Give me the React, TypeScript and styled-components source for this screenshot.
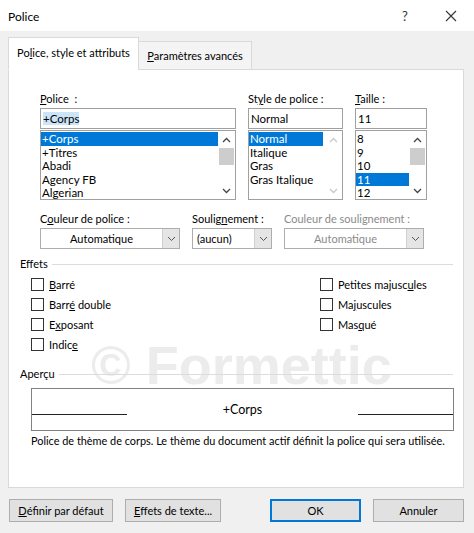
import styled, { createGlobalStyle } from 'styled-components';

const GlobalStyle = createGlobalStyle`
	html, body {
		margin: 0;
		padding: 0;
		background: #f0f0f0;
	}
	body {
		font-family: Lato, 'Noto Sans', sans-serif;
		font-size: 11px;
		color: #000;
	}
`;

const fonts = ['+Corps', '+Titres', 'Abadi', 'Agency FB', 'Algerian'];
const styles = ['Normal', 'Italique', 'Gras', 'Gras Italique'];
const sizes = ['8', '9', '10', '11', '12'];

const App = () => {
	return (
		<Window>
			<GlobalStyle />
			<TitleBar>
				<Title>Police</Title>
				<TitleButtons>
					<TitleBtn>?</TitleBtn>
					<TitleBtn>
						<svg width="12" height="12" viewBox="0 0 12 12">
							<path d="M1 1 L11 11 M11 1 L1 11" stroke="#333" strokeWidth="1.1" fill="none" />
						</svg>
					</TitleBtn>
				</TitleButtons>
			</TitleBar>
			<Body>
				<Tabs>
					<Tab $active>
						Po<u>l</u>ice, style et attributs
					</Tab>
					<Tab>
						<u>P</u>aramètres avancés
					</Tab>
				</Tabs>
				<Panel>
					<Watermark>© Formettic</Watermark>
					<FontGrid>
						<Column>
							<Label>
								<u>P</u>olice&nbsp; :
							</Label>
							<TextBox>
								<Highlight>+Corps</Highlight>
							</TextBox>
							<ListBox>
								<Items>
									{fonts.map((f, i) => (
										<Item key={f} $selected={i === 0}>
											{f}
										</Item>
									))}
								</Items>
								<ScrollBar thumbTop={15} />
							</ListBox>
						</Column>
						<Column>
							<Label>
								St<u>y</u>le de police :
							</Label>
							<TextBox>Normal</TextBox>
							<ListBox>
								<Items>
									{styles.map((f, i) => (
										<Item key={f} $selected={i === 0} $short>
											{f}
										</Item>
									))}
								</Items>
								<ScrollBar disabled />
							</ListBox>
						</Column>
						<Column>
							<Label>
								<u>T</u>aille :
							</Label>
							<TextBox>11</TextBox>
							<ListBox>
								<Items>
									{sizes.map((f, i) => (
										<Item key={f} $selected={i === 3}>
											{f}
										</Item>
									))}
								</Items>
								<ScrollBar thumbTop={15} />
							</ListBox>
						</Column>
					</FontGrid>

					<ComboRow>
						<Column>
							<Label>
								C<u>o</u>uleur de police :
							</Label>
							<Combo>
								<ComboText $center>Automatique</ComboText>
								<Chevron />
							</Combo>
						</Column>
						<Column>
							<Label>
								Soulig<u>n</u>ement :
							</Label>
							<Combo>
								<ComboText>(aucun)</ComboText>
								<Chevron />
							</Combo>
						</Column>
						<Column>
							<Label $disabled>Couleur de soulignement :</Label>
							<Combo>
								<ComboText $center $disabled>
									Automatique
								</ComboText>
								<Chevron />
							</Combo>
						</Column>
					</ComboRow>

					<Group>
						<GroupTitle>Effets</GroupTitle>
						<GroupLine />
					</Group>
					<Effects>
						<EffectCol>
							<Check label={<><u>B</u>arré</>} />
							<Check label={<>Barr<u>é</u> double</>} />
							<Check label={<>E<u>x</u>posant</>} />
							<Check label={<>Indic<u>e</u></>} />
						</EffectCol>
						<EffectCol>
							<Check label={<>Petites majusc<u>u</u>les</>} />
							<Check label={<>Ma<u>j</u>uscules</>} />
							<Check label={<>Mas<u>q</u>ué</>} />
						</EffectCol>
					</Effects>

					<Group $preview>
						<GroupTitle>Aperçu</GroupTitle>
						<GroupLine />
					</Group>
					<Preview>
						<PreviewLine />
						<PreviewText>+Corps</PreviewText>
						<PreviewLine />
					</Preview>
					<Description>
						Police de thème de corps. Le thème du document actif définit la police qui sera utilisée.
					</Description>
				</Panel>
				<Footer>
					<Button $width={104}>
						<u>D</u>éfinir par défaut
					</Button>
					<Button $width={96}>
						<u>E</u>ffets de texte...
					</Button>
					<Spacer />
					<Button $width={91} $primary>
						OK
					</Button>
					<Button $width={91}>Annuler</Button>
				</Footer>
			</Body>
		</Window>
	);
};

export default App;

const Check = ({ label }: { label: React.ReactNode }) => (
	<CheckRow>
		<CheckBox />
		<span>{label}</span>
	</CheckRow>
);

const ScrollBar = ({ thumbTop, disabled }: { thumbTop?: number; disabled?: boolean }) => (
	<Scroll>
		<Arrow $disabled={disabled}>
			<svg width="9" height="6" viewBox="0 0 9 6">
				<path d="M1 5 L4.5 1.5 L8 5" stroke="currentColor" strokeWidth="1.3" fill="none" />
			</svg>
		</Arrow>
		<Track>{!disabled && <Thumb style={{ top: thumbTop }} />}</Track>
		<Arrow $disabled={disabled}>
			<svg width="9" height="6" viewBox="0 0 9 6">
				<path d="M1 1 L4.5 4.5 L8 1" stroke="currentColor" strokeWidth="1.3" fill="none" />
			</svg>
		</Arrow>
	</Scroll>
);

const Chevron = () => (
	<ChevronBox>
		<svg width="9" height="6" viewBox="0 0 9 6">
			<path d="M1 1 L4.5 4.5 L8 1" stroke="#555" strokeWidth="1" fill="none" />
		</svg>
	</ChevronBox>
);

const Window = styled.div`
	width: 474px;
	height: 533px;
	display: flex;
	flex-direction: column;
	background: #f0f0f0;
	overflow: hidden;
`;

const TitleBar = styled.div`
	height: 31px;
	background: #fff;
	display: flex;
	align-items: center;
	justify-content: space-between;
	padding-left: 8px;
`;

const Title = styled.div`
	font-size: 12px;
	margin-top: 1px;
`;

const TitleButtons = styled.div`
	display: flex;
	height: 100%;
`;

const TitleBtn = styled.div`
	width: 46px;
	display: flex;
	align-items: center;
	justify-content: center;
	font-size: 13px;
	color: #333;
`;

const Body = styled.div`
	flex: 1;
	padding: 7px 10px 0 8px;
	display: flex;
	flex-direction: column;
`;

const Tabs = styled.div`
	display: flex;
	align-items: flex-end;
	height: 32px;
	position: relative;
	z-index: 1;
	margin-bottom: -1px;
`;

const Tab = styled.div<{ $active?: boolean }>`
	height: ${(p) => (p.$active ? 33 : 29)}px;
	box-sizing: border-box;
	width: ${(p) => (p.$active ? 131 : 114)}px;
	display: flex;
	align-items: center;
	justify-content: center;
	white-space: nowrap;
	padding-bottom: ${(p) => (p.$active ? 3 : 0)}px;
	border: 1px solid #d9d9d9;
	border-bottom-color: ${(p) => (p.$active ? '#fff' : '#d9d9d9')};
	background: ${(p) => (p.$active ? '#fff' : '#f4f4f4')};
	margin-left: ${(p) => (p.$active ? 0 : -1)}px;
`;

const Panel = styled.div`
	position: relative;
	height: 419px;
	box-sizing: border-box;
	background: #fff;
	border: 1px solid #d9d9d9;
	padding: 21px 10px 0 11px;
	display: flex;
	flex-direction: column;
`;

const Watermark = styled.div`
	position: absolute;
	left: 82px;
	top: 264px;
	font-family: 'Liberation Sans', Arial, sans-serif;
	font-weight: bold;
	font-size: 54px;
	color: #ececec;
	white-space: nowrap;
	pointer-events: none;
`;

const FontGrid = styled.div`
	display: grid;
	grid-template-columns: 196px 95px 72px;
	column-gap: 12px;
	margin-left: 20px;
	position: relative;
`;

const Column = styled.div`
	display: flex;
	flex-direction: column;
`;

const Label = styled.div<{ $disabled?: boolean }>`
	height: 17px;
	line-height: 15px;
	color: ${(p) => (p.$disabled ? '#8a8a8a' : '#000')};
	white-space: nowrap;
`;

const TextBox = styled.div`
	height: 21px;
	box-sizing: border-box;
	border: 1px solid #a0a0a0;
	padding: 0 2px;
	display: flex;
	align-items: center;
	font-size: 11.5px;
`;

const Highlight = styled.span`
	background: #cce4f7;
`;

const ListBox = styled.div`
	margin-top: 1px;
	height: 70px;
	box-sizing: border-box;
	border: 1px solid #a0a0a0;
	display: flex;
	overflow: hidden;
`;

const Items = styled.div`
	flex: 1;
	padding-top: 1px;
	min-width: 0;
`;

const Item = styled.div<{ $selected?: boolean; $short?: boolean }>`
	height: 13.6px;
	line-height: 13.6px;
	padding-left: 1px;
	font-size: 11.5px;
	white-space: nowrap;
	background: ${(p) => (p.$selected ? '#0078d7' : 'transparent')};
	color: ${(p) => (p.$selected ? '#fff' : '#000')};
	${(p) => (p.$short && p.$selected ? 'margin-right: 2px;' : '')}
`;

const Scroll = styled.div`
	width: 17px;
	display: flex;
	flex-direction: column;
	background: #fff;
`;

const Arrow = styled.div<{ $disabled?: boolean }>`
	height: 17px;
	display: flex;
	align-items: center;
	justify-content: center;
	color: ${(p) => (p.$disabled ? '#c8c8c8' : '#444')};
`;

const Track = styled.div`
	flex: 1;
	position: relative;
`;

const Thumb = styled.div`
	position: absolute;
	left: 1px;
	right: 1px;
	height: 17px;
	margin-top: -15px;
	background: #cdcdcd;
`;

const ComboRow = styled.div`
	display: grid;
	grid-template-columns: 140px 80px 140px;
	column-gap: 12px;
	margin-left: 20px;
	margin-top: 11px;
`;

const Combo = styled.div`
	height: 21px;
	box-sizing: border-box;
	border: 1px solid #adadad;
	display: flex;
	background: #fff;
`;

const ComboText = styled.div<{ $center?: boolean; $disabled?: boolean }>`
	flex: 1;
	display: flex;
	align-items: center;
	justify-content: ${(p) => (p.$center ? 'center' : 'flex-start')};
	padding-left: ${(p) => (p.$center ? 0 : 4)}px;
	color: ${(p) => (p.$disabled ? '#8a8a8a' : '#000')};
`;

const ChevronBox = styled.div`
	width: 16px;
	background: #e5e5e5;
	border-left: 1px solid #d0d0d0;
	display: flex;
	align-items: center;
	justify-content: center;
`;

const Group = styled.div<{ $preview?: boolean }>`
	display: flex;
	align-items: center;
	gap: 4px;
	margin-top: ${(p) => (p.$preview ? 15 : 7)}px;
	position: relative;
`;

const GroupTitle = styled.div`
	line-height: 15px;
`;

const GroupLine = styled.div`
	flex: 1;
	height: 1px;
	background: #dcdcdc;
	margin-top: 1px;
`;

const Effects = styled.div`
	display: grid;
	grid-template-columns: 289px 1fr;
	padding-left: 11px;
	margin-top: 7px;
	position: relative;
`;

const EffectCol = styled.div`
	display: flex;
	flex-direction: column;
	gap: 7px;
`;

const CheckRow = styled.div`
	display: flex;
	align-items: center;
	gap: 5px;
	height: 13px;
	white-space: nowrap;
`;

const CheckBox = styled.div`
	width: 13px;
	height: 13px;
	box-sizing: border-box;
	border: 1px solid #333;
	background: #fff;
	flex: none;
`;

const Preview = styled.div`
	margin: 7px 0 0 11px;
	width: 423px;
	height: 43px;
	box-sizing: border-box;
	border: 1px solid #828282;
	display: flex;
	align-items: center;
	position: relative;
`;

const PreviewLine = styled.div`
	width: 95px;
	height: 1px;
	background: #222;
	align-self: flex-start;
	margin-top: 25px;
`;

const PreviewText = styled.div`
	flex: 1;
	text-align: center;
	font-size: 12.5px;
	margin-top: -1px;
`;

const Description = styled.div`
	margin: 3px 0 0 11px;
	font-size: 10.9px;
	white-space: nowrap;
	position: relative;
`;

const Footer = styled.div`
	display: flex;
	align-items: center;
	gap: 12px;
	padding: 0 0 0 1px;
	height: 45px;
`;

const Spacer = styled.div`
	flex: 1;
`;

const Button = styled.div<{ $width: number; $primary?: boolean }>`
	width: ${(p) => p.$width}px;
	height: 23px;
	box-sizing: border-box;
	display: flex;
	align-items: center;
	justify-content: center;
	background: #e1e1e1;
	border: 1px solid ${(p) => (p.$primary ? '#0078d7' : '#adadad')};
	${(p) => (p.$primary ? 'box-shadow: inset 0 0 0 1px #0078d7;' : '')}
	white-space: nowrap;
`;
